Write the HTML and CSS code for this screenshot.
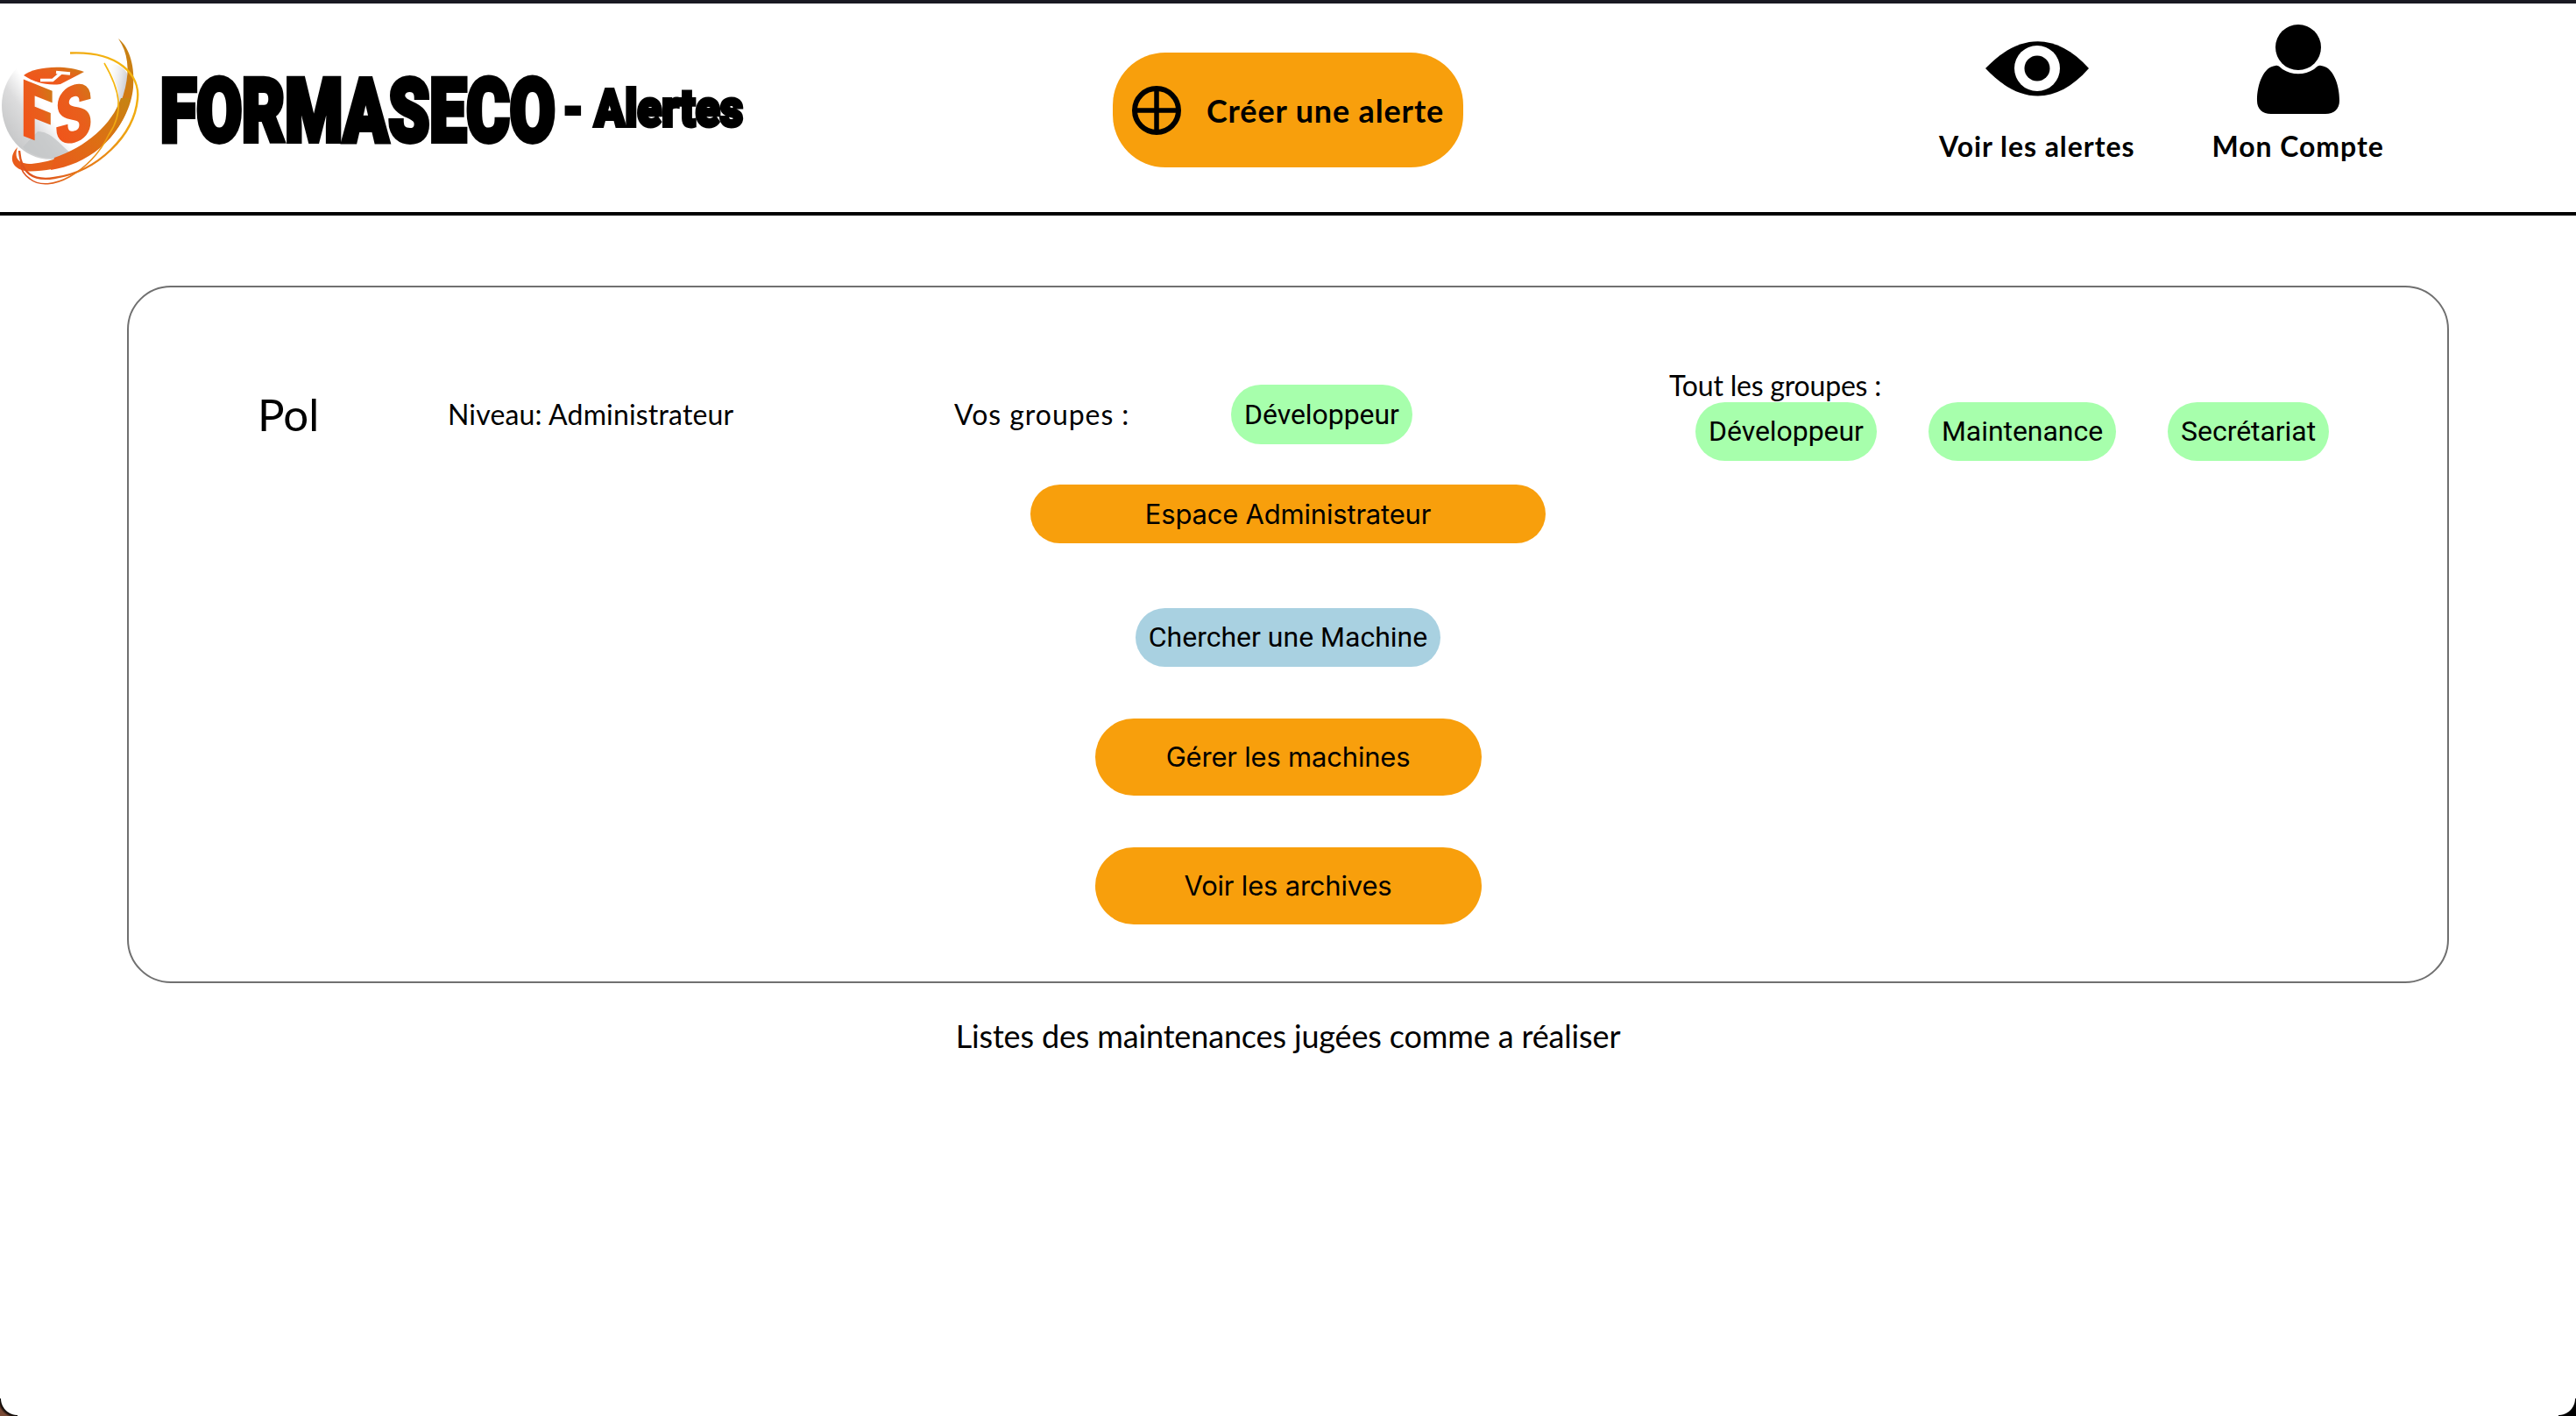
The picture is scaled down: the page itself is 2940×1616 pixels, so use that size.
FILE: index.html
```html
<!DOCTYPE html>
<html lang="fr">
<head>
<meta charset="utf-8">
<title>Formaseco - Alertes</title>
<link rel="stylesheet" href="styles.css">
</head>
<body>
<header class="topbar">
  <a class="brand">
    <svg class="brand-logo" viewBox="0 0 860 238" width="860" height="238">
      <defs>
        <linearGradient id="ball" x1="0" y1="0.65" x2="0.75" y2="0.2">
          <stop offset="0" stop-color="#c9cacb"/>
          <stop offset="0.22" stop-color="#dcdcdd"/>
          <stop offset="0.4" stop-color="#fff"/>
        </linearGradient>
        <linearGradient id="shade" x1="0" y1="0" x2="1" y2="0.5">
          <stop offset="0" stop-color="#fff" stop-opacity="0"/>
          <stop offset="1" stop-color="#bcbcc4"/>
        </linearGradient>
        <linearGradient id="ring" x1="0" y1="1" x2="1" y2="0">
          <stop offset="0" stop-color="#ea5a1c"/>
          <stop offset="0.5" stop-color="#dd6f14"/>
          <stop offset="1" stop-color="#c58412"/>
        </linearGradient>
        <linearGradient id="thin" x1="0" y1="1" x2="1" y2="0">
          <stop offset="0" stop-color="#dd4a20"/>
          <stop offset="0.6" stop-color="#eda012"/>
          <stop offset="1" stop-color="#f7bd10"/>
        </linearGradient>
        <linearGradient id="cube" x1="0" y1="1" x2="1" y2="0">
          <stop offset="0" stop-color="#f4501a"/>
          <stop offset="0.6" stop-color="#e85f1c"/>
          <stop offset="1" stop-color="#c98014"/>
        </linearGradient>
      </defs>
      <path d="M62 58C26 60 2 90 2 120C2 154 26 182 58 182C100 182 148 144 148 96C148 72 105 57 62 58Z" fill="url(#ball)"/>
      <path d="M122 74C136 100 140 112 128 136C146 118 150 92 144 82C138 74 130 72 122 74Z" fill="url(#shade)"/>
      <path d="M43 150C58 150 68 164 82 176C64 184 40 182 26 168Z" fill="#c3c5c7" opacity="0.8"/>
      <path d="M135 44C149 55 154 78 152 100C148 144 106 195 34 195.500C14 195 8 180 20 168C16 180 20 187 36 187C84 182 132 151 143 100C148 79 146 60 135 44Z" fill="url(#ring)"/>
      <path d="M138 112C128 142 98 168 62 180L58 194C98 188 138 160 149 112Z" fill="url(#ring)"/>
      <g fill="none" stroke="url(#thin)">
        <path d="M80 60.500C136 58 160 86 157 113C153 154 112 196 62 203C38 207 24 198 22 172" stroke-width="2.400"/>
        <path d="M119 72C137 103 142 128 124 154C104 196 56 222 34 204C27 199 24 194 24 188" stroke-width="1.600"/>
      </g>
      <path d="M27 86C38 76 74 73 96 82L69 96C54 98 39 94 27 86Z" fill="url(#cube)"/>
      <path d="M46 91.500H60L70 83M64 82.500L80 84" fill="none" stroke="#fff" stroke-width="3.500"/>
      <g class="cube-letters" fill="url(#cube)" stroke="url(#cube)">
        <text transform="matrix(1 .4 0 1 24 153)" textLength="36" lengthAdjust="spacingAndGlyphs">F</text>
        <text transform="matrix(1 -.28 0 1 63 167)" textLength="42" lengthAdjust="spacingAndGlyphs">S</text>
      </g>
      <text class="wordmark" transform="scale(.75 1)" x="244" y="161" textLength="601" lengthAdjust="spacingAndGlyphs">FORMASECO</text>
      <text class="wordmark section" transform="scale(.8 1)" x="803" y="144" textLength="257" lengthAdjust="spacingAndGlyphs">- Alertes</text>
    </svg>
  </a>
  <button class="create">
    <svg width="58" height="58" viewBox="0 0 58 58" fill="none" stroke="#000">
      <circle cx="29" cy="29" r="25" stroke-width="6"/>
      <path d="M29 4V54M4 29H54" stroke-width="5.5"/>
    </svg>
    <span>Créer une alerte</span>
  </button>
  <nav class="links">
    <a class="link">
      <svg width="120" height="110" viewBox="0 0 120 110">
        <path d="M1 60C40 19 82 19 119 60C82 102 40 102 1 60Z"/>
        <circle cx="60" cy="60" r="26" fill="#fff"/>
        <circle cx="60" cy="60" r="14.5"/>
      </svg>
      <span class="voir">Voir les alertes</span>
    </a>
    <a class="link">
      <svg width="94" height="110" viewBox="0 0 94 110">
        <circle cx="47" cy="36" r="26"/>
        <path d="M21 57C25 56 26 59 29 61C40 68 54 68 65 61C68 59 69 56 73 57C86 58 94 77 94 97C94 106 88 112 78 112H16C6 112 0 106 0 97C0 77 8 58 21 57Z"/>
      </svg>
      <span class="compte">Mon Compte</span>
    </a>
  </nav>
</header>
<main>
  <section class="card">
    <div class="profile">
      <span class="name">Pol</span>
      <span class="level">Niveau: Administrateur</span>
      <span class="yours">Vos groupes :</span>
      <div><span class="pill group mine">Développeur</span></div>
      <div class="all">
        <span class="all-title">Tout les groupes :</span>
        <div class="all-list">
          <span class="pill group">Développeur</span>
          <span class="pill group">Maintenance</span>
          <span class="pill group">Secrétariat</span>
        </div>
      </div>
    </div>
    <div class="actions">
      <button class="pill orange admin">Espace Administrateur</button>
      <button class="pill blue">Chercher une Machine</button>
      <button class="pill orange tall">Gérer les machines</button>
      <button class="pill orange tall archives">Voir les archives</button>
    </div>
  </section>
  <p class="list-title">Listes des maintenances jugées comme a réaliser</p>
</main>
<div class="corner left"></div>
<div class="corner right"></div>
</body>
</html>
```
FILE: styles.css
```css
* { box-sizing: border-box; }
html, body { height: 100%; }
body {
  margin: 0;
  overflow: hidden;
  background: #fff;
  color: #000;
  font: 32px/38px Lato, sans-serif;
}
button { border: 0; margin: 0; padding: 0; font: inherit; color: inherit; }
svg { display: block; overflow: visible; }

.topbar {
  height: 246px;
  border-top: 4px solid #1a1a22;
  border-bottom: 4px solid #000;
  display: grid;
  grid-template-columns: 1270px 400px 1fr;
  align-items: start;
}
.brand-logo { margin-top: -4px; }
.wordmark {
  font: 900 100px Roboto, sans-serif;
  stroke: #000;
  stroke-width: 6px;
}
.wordmark.section { font-size: 60px; stroke-width: 4px; }
.cube-letters { font: 900 88px Roboto, sans-serif; stroke-width: 2px; }

.create {
  height: 131px;
  margin-top: 56px;
  padding-left: 21px;
  border-radius: 60px;
  background: #f89f0c;
  display: flex;
  align-items: center;
  font-size: 36px;
  font-weight: 700;
  letter-spacing: 0.85px;
}
.create span { margin-left: 28px; white-space: nowrap; }

.links { display: flex; padding-left: 543px; gap: 88px; padding-top: 14px; }
.link {
  display: flex;
  flex-direction: column;
  align-items: center;
  font-weight: 700;
  letter-spacing: 0.95px;
  white-space: nowrap;
}
.link span { margin-top: 20px; }

.card {
  width: 2650px;
  height: 796px;
  margin: 80px auto 0;
  padding-top: 92px;
  border: 2px solid #707070;
  border-radius: 50px;
}
.profile {
  display: grid;
  grid-template-columns: 217px 578px 316px 500px 1fr;
  align-items: center;
  height: 106px;
  padding-left: 147px;
  white-space: nowrap;
}
.name { font-size: 51px; line-height: 60px; }
.level { letter-spacing: 0.17px; }
.yours { letter-spacing: 0.95px; }
.all { display: flex; flex-direction: column; align-items: flex-start; }
.all-title { letter-spacing: -0.2px; }
.all-list { display: flex; gap: 59px; padding-left: 30px; }

.pill {
  display: block;
  height: 67px;
  padding: 0 15px;
  border-radius: 34px;
  font: 32px/67px Roboto, sans-serif;
  text-align: center;
  white-space: nowrap;
}
.group { background: #a7ffac; letter-spacing: -0.05px; }
.mine { display: inline-block; height: 68px; line-height: 68px; vertical-align: top; }
.blue { background: #a9d1e1; margin-top: 74px; }
.orange {
  background: #f89f0c;
  font-family: Inter, sans-serif;
  font-size: 31px;
  letter-spacing: -0.2px;
}
.admin { width: 588px; }
.tall { width: 441px; height: 88px; line-height: 88px; border-radius: 44px; margin-top: 59px; }
.actions {
  display: flex;
  flex-direction: column;
  align-items: center;
  padding-top: 27px;
}
.list-title {
  margin: 38px 0 0;
  font-size: 36px;
  line-height: 44px;
  letter-spacing: -0.15px;
  text-align: center;
}

/* Rounded window corners over the page */
.corner {
  position: absolute;
  bottom: 0;
  width: 20px;
  height: 20px;
}
.corner.left { left: 0; background: radial-gradient(circle at 100% 0, transparent 18.5px, #0a0604 19.5px, #2c1a12 21px, #7a4a36 23px); }
.corner.right { right: 0; background: radial-gradient(circle at 0 0, transparent 18.5px, #000 19.5px); }
```
